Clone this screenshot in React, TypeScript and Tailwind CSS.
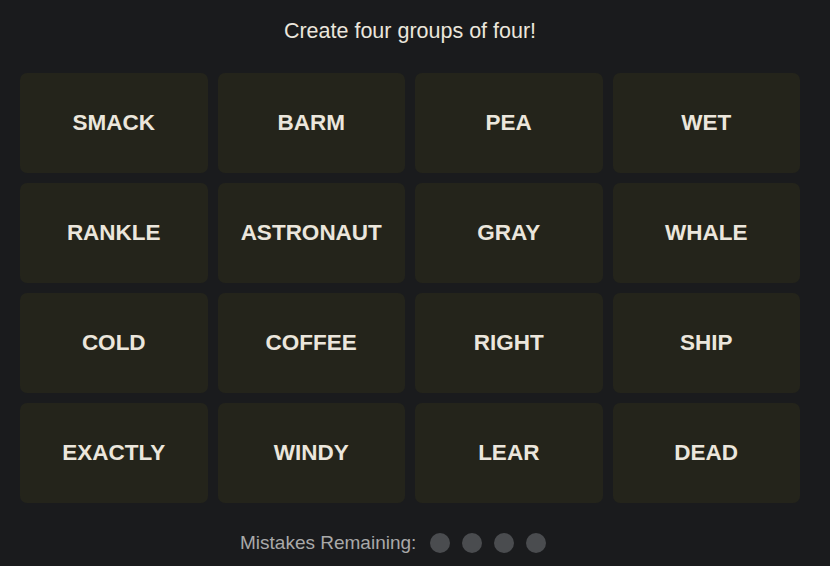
const words = [
  'SMACK', 'BARM', 'PEA', 'WET',
  'RANKLE', 'ASTRONAUT', 'GRAY', 'WHALE',
  'COLD', 'COFFEE', 'RIGHT', 'SHIP',
  'EXACTLY', 'WINDY', 'LEAR', 'DEAD',
];

export default function App() {
  return (
    <div className="h-[566px] w-[830px] bg-[#1a1b1d] font-['Liberation_Sans',Arial,sans-serif] text-[#ebe6dc]">
      <div className="ml-5 w-[780px]">
        <p className="pt-[18px] text-center text-[21.5px] leading-[26px]">Create four groups of four!</p>
        <div className="mt-[29px] grid grid-cols-4 gap-[10px]">
          {words.map((w) => (
            <button
              key={w}
              className="flex h-[100px] items-center justify-center rounded-[7px] bg-[#24241b] text-[22.5px] font-bold text-[#ebe6dc]"
            >
              {w}
            </button>
          ))}
        </div>
        <div className="mt-[28px] flex items-center pl-[220px]">
          <span className="mr-[14px] text-[19px] leading-6 text-[#a9a9a9]">Mistakes Remaining:</span>
          <div className="flex gap-3">
            {[0, 1, 2, 3].map((i) => (
              <span key={i} className="h-5 w-5 rounded-full bg-[#4a4c4f]" />
            ))}
          </div>
        </div>
      </div>
    </div>
  );
}
